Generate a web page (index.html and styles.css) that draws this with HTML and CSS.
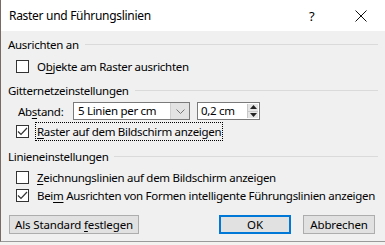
FILE: index.html
```html
<!DOCTYPE html>
<html lang="de">
<head>
  <meta charset="UTF-8" />
  <title>Raster und Führungslinien</title>
  <link rel="stylesheet" href="styles.css">
</head>
<body>
  <div class="dialog">
    <div class="titlebar">
      <span class="title">Raster und Führungslinien</span>
      <span class="help">?</span>
      <svg class="close" width="12" height="12" viewBox="0 0 12 12">
        <path d="M0.5 0.5 L11.5 11.5 M11.5 0.5 L0.5 11.5" stroke="#111" stroke-width="1" fill="none"/>
      </svg>
    </div>

    <div class="content">
      <!-- Ausrichten an -->
      <div class="group-head head-1"><span>Ausrichten an</span><i class="rule"></i></div>
      <label class="check-row row-1">
        <span class="box"></span>
        <span>O<u>b</u>jekte am Raster ausrichten</span>
      </label>

      <!-- Gitternetz -->
      <div class="group-head head-2"><span>Gitternetzeinstellungen</span><i class="rule"></i></div>
      <div class="field-row">
        <span class="field-label">Ab<u>s</u>tand:</span>
        <div class="select">
          <span class="select-text">5 Linien per cm</span>
          <span class="select-btn">
            <svg width="9" height="5" viewBox="0 0 9 5"><path d="M0.5 0.5 L4.5 4.5 L8.5 0.5" stroke="#777" fill="none"/></svg>
          </span>
        </div>
        <div class="spin">
          <span class="spin-text">0,2 cm</span>
          <span class="spin-btns">
            <span class="spin-up"><svg width="7" height="4" viewBox="0 0 7 4"><path d="M0 4 L3.5 0 L7 4 Z" fill="#222"/></svg></span>
            <span class="spin-down"><svg width="7" height="4" viewBox="0 0 7 4"><path d="M0 0 L3.5 4 L7 0 Z" fill="#222"/></svg></span>
          </span>
        </div>
      </div>
      <label class="check-row row-2">
        <span class="box checked">
          <svg width="11" height="9" viewBox="0 0 11 9"><path d="M1 4.5 L4 7.5 L10 1" stroke="#333" stroke-width="1.2" fill="none"/></svg>
        </span>
        <span class="focus"><u>R</u>aster auf dem Bildschirm anzeigen</span>
      </label>

      <!-- Linien -->
      <div class="group-head head-3"><span>Linieneinstellungen</span><i class="rule"></i></div>
      <label class="check-row row-3">
        <span class="box"></span>
        <span><u>Z</u>eichnungslinien auf dem Bildschirm anzeigen</span>
      </label>
      <label class="check-row row-4">
        <span class="box checked">
          <svg width="11" height="9" viewBox="0 0 11 9"><path d="M1 4.5 L4 7.5 L10 1" stroke="#333" stroke-width="1.2" fill="none"/></svg>
        </span>
        <span>Bei<u>m</u> Ausrichten von Formen intelligente Führungslinien anzeigen</span>
      </label>

      <div class="buttons">
        <button class="btn btn-wide">Als Standard <u>f</u>estlegen</button>
        <span class="spacer"></span>
        <button class="btn btn-ok">OK</button>
        <button class="btn">Abbrechen</button>
      </div>
    </div>
  </div>
</body>
</html>
```

FILE: styles.css
```css
* {
  box-sizing: border-box;
}

body {
  margin: 0;
  background: #f4f1f1;
  font-family: "Noto Sans", "Open Sans", sans-serif;
  font-size: 11.5px;
  letter-spacing: -0.3px;
  color: #000;
  white-space: nowrap;
}

u {
  text-decoration-thickness: 1px;
  text-underline-offset: 2px;
}

.dialog {
  width: 385px;
  height: 242px;
  background: #f0f0f0;
  border-left: 1px solid #7a6a66;
  border-bottom: 1px solid #9a9a9a;
  display: flex;
  flex-direction: column;
}

.titlebar {
  height: 31px;
  background: #fff;
  display: flex;
  align-items: center;
  padding-left: 8px;
  flex-shrink: 0;
  font-size: 12px;
}

.title {
  flex: 1;
}

.help {
  width: 10px;
  margin-right: 36px;
  font-size: 13px;
}

.close {
  margin-right: 18px;
}

.content {
  padding: 0 7px 0 7px;
  display: flex;
  flex-direction: column;
}

.group-head {
  display: flex;
  align-items: center;
  height: 20px;
}

.group-head .rule {
  flex: 1;
  height: 1px;
  background: #dadada;
  margin-left: 6px;
}

.head-1 {
  height: 26px;
}

.head-2,
.head-3 {
  margin-top: 5px;
}

.check-row {
  display: flex;
  align-items: center;
  height: 18px;
  padding-left: 8px;
}

.row-2 {
  height: 19px;
  margin-top: 2px;
}

.row-3 {
  margin-top: 2px;
}

.box {
  width: 13px;
  height: 13px;
  border: 1px solid #333;
  background: #fff;
  margin-right: 8px;
  display: flex;
  align-items: center;
  justify-content: center;
  flex-shrink: 0;
}

.box svg {
  display: block;
}

.row-2 .box {
  margin-right: 6px;
}

.focus {
  border: 1px dotted #000;
  padding: 0 1px;
  line-height: 17px;
}

.field-row {
  display: flex;
  align-items: center;
  height: 18px;
  margin-top: 2px;
  padding-left: 10px;
}

.field-label {
  width: 55px;
}

.select {
  width: 117px;
  height: 18px;
  border: 1px solid #7a7a7a;
  background: #fff;
  display: flex;
  align-items: stretch;
}

.select-text {
  flex: 1;
  padding-left: 4px;
  line-height: 16px;
}

.select-btn {
  width: 19px;
  background: #e3e3e3;
  border-left: 1px solid #cfcfcf;
  display: flex;
  align-items: center;
  justify-content: center;
}

.spin {
  width: 63px;
  height: 18px;
  margin-left: 7px;
  border: 1px solid #7a7a7a;
  background: #fff;
  display: flex;
}

.spin-text {
  flex: 1;
  padding-left: 3px;
  line-height: 16px;
}

.spin-btns {
  width: 11px;
  display: flex;
  flex-direction: column;
  border-left: 1px solid #c8c8c8;
  margin: 1px 1px 1px 0;
}

.spin-up,
.spin-down {
  flex: 1;
  display: flex;
  align-items: center;
  justify-content: center;
  background: #e6e6e6;
}

.spin-up {
  border-bottom: 1px solid #c8c8c8;
}

.spin-btns svg {
  display: block;
}

.buttons {
  display: flex;
  margin-top: 11px;
  padding-left: 1px;
  padding-right: 3px;
}

.spacer {
  flex: 1;
}

.btn {
  height: 19px;
  width: 72px;
  background: #e1e1e1;
  border: 1px solid #adadad;
  font-family: inherit;
  font-size: 11.5px;
  letter-spacing: -0.15px;
  padding: 0;
  color: #000;
}

.btn-wide {
  width: 130px;
}

.btn-ok {
  border: 2px solid #0078d7;
  margin-right: 12px;
}
```
